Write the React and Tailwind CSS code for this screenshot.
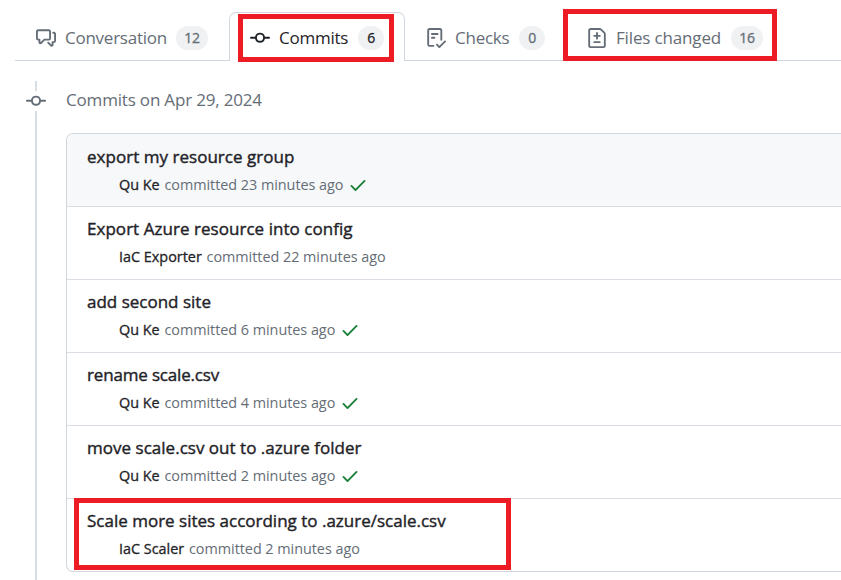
const ICONS = {
  discussion:
    'M1.75 1h8.5c.966 0 1.75.784 1.75 1.75v5.5A1.75 1.75 0 0 1 10.25 10H7.061l-2.574 2.573A1.458 1.458 0 0 1 2 11.543V10h-.25A1.75 1.75 0 0 1 0 8.25v-5.5C0 1.784.784 1 1.75 1ZM1.5 2.75v5.5c0 .138.112.25.25.25h1a.75.75 0 0 1 .75.75v2.19l2.72-2.72a.749.749 0 0 1 .53-.22h3.5a.25.25 0 0 0 .25-.25v-5.5a.25.25 0 0 0-.25-.25h-8.5a.25.25 0 0 0-.25.25Zm13 2a.25.25 0 0 0-.25-.25h-.5a.75.75 0 0 1 0-1.5h.5c.966 0 1.75.784 1.75 1.75v5.5A1.75 1.75 0 0 1 14.25 12H14v1.543a1.458 1.458 0 0 1-2.487 1.03L9.22 12.28a.749.749 0 0 1 .326-1.275.749.749 0 0 1 .734.215l2.22 2.22v-2.19a.75.75 0 0 1 .75-.75h1a.25.25 0 0 0 .25-.25Z',
  commit:
    'M11.93 8.5a4.002 4.002 0 0 1-7.86 0H.75a.75.75 0 0 1 0-1.5h3.32a4.002 4.002 0 0 1 7.86 0h3.32a.75.75 0 0 1 0 1.5Zm-1.43-.75a2.5 2.5 0 1 0-5 0 2.5 2.5 0 0 0 5 0Z',
  checklist:
    'M2.5 1.75v11.5c0 .138.112.25.25.25h3.17a.75.75 0 0 1 0 1.5H2.75A1.75 1.75 0 0 1 1 13.25V1.75C1 .784 1.784 0 2.75 0h8.5C12.216 0 13 .784 13 1.75v7.736a.75.75 0 0 1-1.5 0V1.75a.25.25 0 0 0-.25-.25h-8.5a.25.25 0 0 0-.25.25Zm13.274 9.537v-.001l-4.557 4.45a.75.75 0 0 1-1.055-.008l-1.943-1.95a.75.75 0 0 1 1.062-1.058l1.419 1.425 4.026-3.932a.75.75 0 1 1 1.048 1.074ZM4.75 4h4.5a.75.75 0 0 1 0 1.5h-4.5a.75.75 0 0 1 0-1.5ZM4 7.75A.75.75 0 0 1 4.75 7h2a.75.75 0 0 1 0 1.5h-2A.75.75 0 0 1 4 7.75Z',
  fileDiff:
    'M1 1.75C1 .784 1.784 0 2.75 0h7.586c.464 0 .909.184 1.237.513l2.914 2.914c.329.328.513.773.513 1.237v9.586A1.75 1.75 0 0 1 13.25 16H2.75A1.75 1.75 0 0 1 1 14.25Zm1.75-.25a.25.25 0 0 0-.25.25v12.5c0 .138.112.25.25.25h10.5a.25.25 0 0 0 .25-.25V4.664a.25.25 0 0 0-.073-.177l-2.914-2.914a.25.25 0 0 0-.177-.073ZM8 3.25a.75.75 0 0 1 .75.75v1.5h1.5a.75.75 0 0 1 0 1.5h-1.5v1.5a.75.75 0 0 1-1.5 0V7h-1.5a.75.75 0 0 1 0-1.5h1.5V4A.75.75 0 0 1 8 3.25Zm-3 8a.75.75 0 0 1 .75-.75h4.5a.75.75 0 0 1 0 1.5h-4.5a.75.75 0 0 1-.75-.75Z',
  check:
    'M13.78 4.22a.75.75 0 0 1 0 1.06l-7.25 7.25a.75.75 0 0 1-1.06 0L2.22 9.28a.751.751 0 0 1 .018-1.042.751.751 0 0 1 1.042-.018L6 10.94l6.72-6.72a.75.75 0 0 1 1.06 0Z',
};

function Icon({ name, className }) {
  return (
    <svg viewBox="0 0 16 16" className={`block h-5 w-5 shrink-0 fill-current ${className}`}>
      <path d={ICONS[name]} />
    </svg>
  );
}

function Tab({ icon, label, count, className, labelClass, countClass, active }) {
  return (
    <div
      className={`flex h-[49px] shrink-0 items-center ${
        active
          ? 'rounded-t-[7px] border border-b-0 border-[#d0d7de] bg-white text-[#1f2328]'
          : 'text-[#656d76]'
      } ${className}`}
    >
      <Icon name={icon} className={active ? '' : 'text-[#656d76]'} />
      <span className={`shrink-0 text-[17px] leading-6 whitespace-nowrap ${labelClass}`}>{label}</span>
      <span
        className={`flex h-6 shrink-0 items-center justify-center rounded-full bg-[#eff1f3] pb-px text-[14px] tracking-[-0.3px] [-webkit-text-stroke:0.3px] ${countClass}`}
      >
        {count}
      </span>
    </div>
  );
}

const commits = [
  { title: 'export my resource group', author: 'Qu Ke', age: 'committed 23 minutes ago', ok: true, w: 'w-[224px]', tracking: 'tracking-[0.03px]' },
  { title: 'Export Azure resource into config', author: 'IaC Exporter', age: 'committed 22 minutes ago', tracking: 'tracking-[0.04px]' },
  { title: 'add second site', author: 'Qu Ke', age: 'committed 6 minutes ago', ok: true, w: 'w-[216px]', tracking: 'tracking-normal' },
  { title: 'rename scale.csv', author: 'Qu Ke', age: 'committed 4 minutes ago', ok: true, w: 'w-[216px]', tracking: 'tracking-[-0.17px]' },
  { title: 'move scale.csv out to .azure folder', author: 'Qu Ke', age: 'committed 2 minutes ago', ok: true, w: 'w-[216px]', tracking: 'tracking-[0.02px]' },
  { title: 'Scale more sites according to .azure/scale.csv', author: 'IaC Scaler', age: 'committed 2 minutes ago', tracking: 'tracking-normal' },
];

function CommitRow({ commit, first, last }) {
  return (
    <div
      className={`flex flex-col pl-5 ${last ? 'h-[72px]' : 'h-[73px] border-b border-[#d8dee4]'} ${
        first ? 'rounded-tl-[6px] bg-[#f6f8fa] pt-[11px]' : 'pt-[10px]'
      }`}
    >
      <div
        className={`h-6 text-[17px] leading-6 whitespace-nowrap text-[#1f2328] [-webkit-text-stroke:0.4px] ${commit.tracking}`}
      >
        {commit.title}
      </div>
      <div className="mt-1 flex h-6 items-center pl-8 text-[14.4px] leading-6 whitespace-nowrap">
        <div className={commit.w || ''}>
          <span className="mr-px text-[#1f2328] [-webkit-text-stroke:0.3px]">{commit.author}</span>{' '}
          <span className="tracking-[-0.03px] text-[#656d76]">{commit.age}</span>
        </div>
        {commit.ok && <Icon name="check" className="ml-[5px] text-[#1a7f37]" />}
      </div>
    </div>
  );
}

export default function App() {
  return (
    <div className="relative h-[580px] w-[841px] overflow-hidden bg-white font-['Open_Sans','Noto_Sans',sans-serif]">
      <div className="flex h-[61px] pl-[15px]">
        <div className="flex h-[61px] flex-1 border-b border-[#d0d7de] pt-3">
          <Tab icon="discussion" label="Conversation" count="12" className="w-[214px] pb-px pl-[21px] pt-1" labelClass="ml-[9px] w-[111px] tracking-[-0.25px]" countClass="w-8" />
          <Tab icon="commit" label="Commits" count="6" active className="w-[176px] pl-5 pt-[2px]" labelClass="ml-[9px] w-[79px] tracking-[-0.25px]" countClass="w-[26px]" />
          <Tab icon="checklist" label="Checks" count="0" className="w-[160px] pb-px pl-[21px] pt-1" labelClass="ml-[9px] w-[64px] tracking-[-0.25px]" countClass="w-[26px]" />
          <Tab icon="fileDiff" label="Files changed" count="16" className="w-[200px] pb-px pl-[22px] pt-1" labelClass="ml-[9px] w-[115px] tracking-[-0.15px]" countClass="w-8" />
        </div>
      </div>
      <div className="flex">
        <div className="flex w-[66px] shrink-0 flex-col pt-5 pl-[26px]">
          <div className="ml-[9px] h-[10px] w-[2px] bg-[#d8dee4]" />
          <Icon name="commit" className="text-[#656d76]" />
          <div className="ml-[9px] h-[469px] w-[2px] bg-[#d8dee4]" />
        </div>
        <div className="flex-1 pt-[27px]">
          <div className="h-6 text-[17px] leading-6 tracking-[-0.18px] text-[#656d76]">Commits on Apr 29, 2024</div>
          <div className="mt-[21px] rounded-l-[7px] border border-r-0 border-[#d0d7de]">
            {commits.map((commit, i) => (
              <CommitRow key={commit.title} commit={commit} first={i === 0} last={i === commits.length - 1} />
            ))}
          </div>
        </div>
      </div>
      <div className="absolute left-[238px] top-[14px] h-[48px] w-[156px] border-[5px] border-[#ed1c24]" />
      <div className="absolute left-[563px] top-[9px] h-[52px] w-[214px] border-[5px] border-[#ed1c24]" />
      <div className="absolute left-[74px] top-[498px] h-[72px] w-[437px] border-[5px] border-[#ed1c24]" />
    </div>
  );
}
